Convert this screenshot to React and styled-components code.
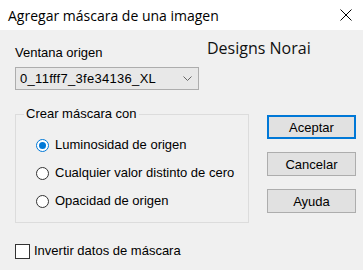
import React from "react";
import styled, { createGlobalStyle } from "styled-components";

const Global = createGlobalStyle`
  html, body { margin: 0; padding: 0; background: #f0f0f0; }
  body { font-family: "Liberation Sans", Arial, sans-serif; }
`;

const Window = styled.div`
  width: 363px;
  height: 270px;
  background: #f0f0f0;
  overflow: hidden;
  color: #000;
  font-size: 13px;
`;

const TitleBar = styled.div`
  height: 30px;
  background: #fff;
  display: flex;
  align-items: center;
  justify-content: space-between;
  padding: 0 11px 0 8px;
  font-family: "Open Sans", "Noto Sans", sans-serif;
  font-size: 14px;
  color: #000;
`;

const Body = styled.div`
  padding: 0 0 0 15px;
  display: flex;
  flex-direction: column;
`;

const TopRow = styled.div`
  display: flex;
  align-items: flex-start;
`;

const SourceCol = styled.div`
  display: flex;
  flex-direction: column;
  width: 184px;
`;

const Label = styled.div`
  margin-top: 15px;
  line-height: 16px;
`;

const Select = styled.div`
  margin-top: 6px;
  height: 21px;
  border: 1px solid #adadad;
  background: #e8e8e8;
  display: flex;
  align-items: center;
  justify-content: space-between;
  padding: 0 6px 0 4px;
  letter-spacing: 0.3px;
`;

const Brand = styled.div`
  margin: 7px 0 0 8px;
  font-family: "Open Sans", "Noto Sans", sans-serif;
  font-size: 16px;
  color: #111;
`;

const MiddleRow = styled.div`
  display: flex;
  align-items: flex-start;
  margin-top: 16px;
`;

const Group = styled.fieldset`
  margin: 0;
  width: 234px;
  height: 117px;
  box-sizing: border-box;
  border: 1px solid #dcdcdc;
  padding: 15px 0 0 20px;
  display: flex;
  flex-direction: column;
  gap: 12px;
`;

const Legend = styled.legend`
  padding: 0 2px;
  margin-left: -12px;
  line-height: 16px;
`;

const OptionRow = styled.label`
  display: flex;
  align-items: center;
  gap: 6px;
  line-height: 16px;
`;

const Radio = styled.span`
  width: 13px;
  height: 13px;
  border-radius: 50%;
  box-sizing: border-box;
  border: 1px solid ${(p) => (p.$checked ? "#0078d7" : "#333")};
  background: #fff;
  display: flex;
  align-items: center;
  justify-content: center;
  &::after {
    content: "";
    width: 7px;
    height: 7px;
    border-radius: 50%;
    background: ${(p) => (p.$checked ? "#0078d7" : "transparent")};
  }
`;

const ButtonCol = styled.div`
  display: flex;
  flex-direction: column;
  gap: 13px;
  margin: 9px 0 0 18px;
`;

const Button = styled.div`
  width: 89px;
  height: 24px;
  box-sizing: border-box;
  background: #e1e1e1;
  border: ${(p) => (p.$default ? "2px solid #0078d7" : "1px solid #adadad")};
  display: flex;
  align-items: center;
  justify-content: center;
`;

const CheckRow = styled.label`
  display: flex;
  align-items: center;
  gap: 4px;
  margin-top: 20px;
  line-height: 16px;
`;

const Box = styled.span`
  width: 15px;
  height: 15px;
  box-sizing: border-box;
  border: 1px solid #333;
  background: #fff;
`;

const options = [
  { text: "Luminosidad de origen", checked: true },
  { text: "Cualquier valor distinto de cero", checked: false },
  { text: "Opacidad de origen", checked: false },
];

export default function App() {
  return (
    <Window>
      <Global />
      <TitleBar>
        <span>Agregar máscara de una imagen</span>
        <svg width="12" height="12" viewBox="0 0 12 12">
          <path d="M0.5 0.5 L11.5 11.5 M11.5 0.5 L0.5 11.5" stroke="#000" strokeWidth="1" />
        </svg>
      </TitleBar>
      <Body>
        <TopRow>
          <SourceCol>
            <Label>Ventana origen</Label>
            <Select>
              <span>0_11fff7_3fe34136_XL</span>
              <svg width="9" height="6" viewBox="0 0 9 6">
                <path d="M0.5 0.5 L4.5 4.5 L8.5 0.5" stroke="#666" fill="none" strokeWidth="1" />
              </svg>
            </Select>
          </SourceCol>
          <Brand>Designs Norai</Brand>
        </TopRow>
        <MiddleRow>
          <Group>
            <Legend>Crear máscara con</Legend>
            {options.map((o) => (
              <OptionRow key={o.text}>
                <Radio $checked={o.checked} />
                {o.text}
              </OptionRow>
            ))}
          </Group>
          <ButtonCol>
            <Button $default>Aceptar</Button>
            <Button>Cancelar</Button>
            <Button>Ayuda</Button>
          </ButtonCol>
        </MiddleRow>
        <CheckRow>
          <Box />
          Invertir datos de máscara
        </CheckRow>
      </Body>
    </Window>
  );
}
